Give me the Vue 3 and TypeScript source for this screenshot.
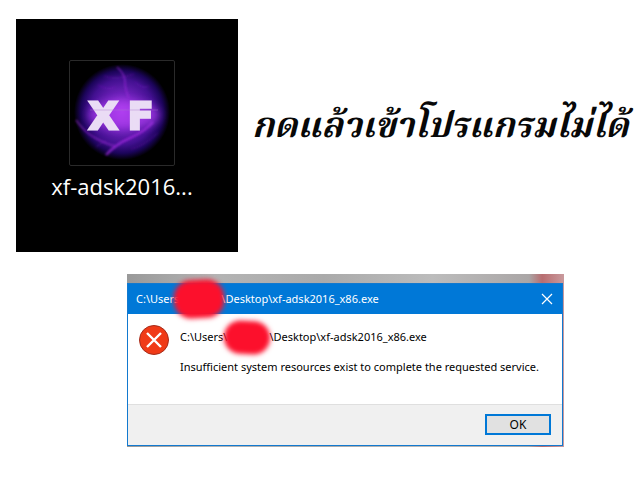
<script setup lang="ts">
interface DialogMessage {
  root: string
  file: string
  detail: string
}

const shortcutLabel: string = 'xf-adsk2016...'
const caption: string = 'กดแล้วเข้าโปรแกรมไม่ได้'
const message: DialogMessage = {
  root: 'C:\\Users',
  file: '\\Desktop\\xf-adsk2016_x86.exe',
  detail: 'Insufficient system resources exist to complete the requested service.',
}
</script>

<template>
  <main class="page">
    <section class="intro">
      <figure class="desktop">
        <div class="tile">
          <svg class="logo" viewBox="0 0 104 104" role="img" aria-label="XF">
            <defs>
              <radialGradient id="orb">
                <stop offset="0" stop-color="#b443f0" />
                <stop offset="0.35" stop-color="#7223be" />
                <stop offset="0.68" stop-color="#421090" />
                <stop offset="0.86" stop-color="#1b0459" />
                <stop offset="1" stop-color="#000000" />
              </radialGradient>
              <filter id="soft" x="-20%" y="-20%" width="140%" height="140%">
                <feGaussianBlur stdDeviation="0.8" />
              </filter>
              <filter id="glow" x="-30%" y="-50%" width="160%" height="200%">
                <feGaussianBlur stdDeviation="4" />
              </filter>
              <filter id="edge" x="-10%" y="-10%" width="120%" height="120%">
                <feGaussianBlur stdDeviation="0.5" />
              </filter>
            </defs>
            <circle cx="52" cy="51" r="48" fill="url(#orb)" />
            <g fill="none" stroke="#a32be0" filter="url(#soft)">
              <path d="M47 6 Q55 13 55 21 T59 37" stroke-width="1.5" opacity="0.6" />
              <path d="M6 59 Q15 72 27 78 T45 85" stroke-width="2" opacity="0.5" />
              <path d="M36 94 Q46 83 60 77 T83 61" stroke-width="2.5" opacity="0.7" />
              <path d="M28 24 Q38 30 45 26 M65 21 Q73 29 79 25 M34 15 Q46 20 64 13" opacity="0.3" />
              <path d="M61 88 Q72 86 88 72 M26 86 Q31 82 36 80" opacity="0.3" />
            </g>
            <ellipse cx="54" cy="54" rx="36" ry="14" fill="#ae3df0" opacity="0.7" filter="url(#glow)" />
            <g class="letters" filter="url(#edge)">
              <text x="19" y="68">X</text>
              <text x="58" y="68">F</text>
            </g>
            <path d="M20 49 H88" stroke="#a777cc" opacity="0.4" />
          </svg>
        </div>
        <figcaption class="shortcut">{{ shortcutLabel }}</figcaption>
      </figure>
      <h1 class="caption">{{ caption }}</h1>
    </section>

    <section class="shot">
      <div class="dialog" role="alertdialog" aria-labelledby="dialog-title" aria-describedby="dialog-text">
        <header class="titlebar">
          <h2 id="dialog-title" class="path">
            <span>{{ message.root }}</span><span class="redacted"></span><span>{{ message.file }}</span>
          </h2>
          <button class="close" type="button" aria-label="Close">
            <svg viewBox="0 0 12 12"><path d="M1 1 L11 11 M11 1 L1 11" /></svg>
          </button>
        </header>
        <div class="body">
          <svg class="error" viewBox="0 0 32 32" aria-hidden="true">
            <circle cx="16" cy="16" r="14.5" fill="#f03a17" stroke="#a52c1b" />
            <path d="M9 9 L23 23 M23 9 L9 23" stroke="#ffffff" stroke-width="2.4" />
          </svg>
          <div id="dialog-text" class="text">
            <p class="path">
              <span>{{ message.root }}\</span><span class="redacted"></span><span>{{ message.file }}</span>
            </p>
            <p>{{ message.detail }}</p>
          </div>
        </div>
        <footer class="actions">
          <button class="ok" type="button">OK</button>
        </footer>
      </div>
    </section>
  </main>
</template>

<style>
body {
  margin: 0;
  background: #ffffff;
}
</style>

<style scoped>
.page {
  padding: 19px 4px 32px 16px;
  font-family: "Noto Sans", "Open Sans", sans-serif;
}

.intro {
  display: flex;
  gap: 14px;
}

.desktop {
  display: flex;
  flex: 0 0 222px;
  flex-direction: column;
  align-items: center;
  box-sizing: border-box;
  margin: 0;
  padding: 41px 10px 52px 0;
  background: #000000;
}

.tile {
  width: 104px;
  height: 104px;
  border: 1px solid #2a2a2a;
  border-radius: 2px;
}

.logo {
  display: block;
}

.letters {
  fill: #eadcf5;
  stroke: #eadcf5;
  stroke-width: 3px;
  font-family: "DejaVu Sans", sans-serif;
  font-size: 37px;
  font-weight: 700;
}

.shortcut {
  padding-top: 6px;
  color: #ffffff;
  font-family: "Open Sans", "Noto Sans", sans-serif;
  font-size: 22px;
  line-height: 28px;
  white-space: nowrap;
}

.caption {
  margin: 0;
  padding-top: 82px;
  color: #080808;
  font-family: "Noto Serif Thai", "Liberation Serif", serif;
  font-size: 35px;
  font-style: italic;
  font-weight: 700;
  line-height: 54px;
  white-space: nowrap;
}

.shot {
  margin: 22px 72px 0 111px;
  padding: 9px 1px 1px 0;
  background: linear-gradient(90deg, #999999, #b4b4b4 20%, #aaaaaa 45%, #bcbcbc 70%, #aaa6a6 92%, #b86d70 95%, #c99a9d);
}

.dialog {
  border: 1px solid #1279cf;
  background: #ffffff;
  color: #000000;
  font-size: 11px;
  line-height: 16px;
}

.titlebar {
  display: flex;
  align-items: center;
  justify-content: space-between;
  height: 30px;
  padding: 0 7px 0 8px;
  background: #0078d7;
  color: #ffffff;
}

.path {
  display: flex;
  font-size: 11px;
  font-weight: 400;
}

.titlebar .path {
  margin: 0;
}

.redacted {
  position: relative;
  width: 42px;
}

.redacted::after {
  position: absolute;
  inset: -10px -2px -10px -4px;
  border-radius: 16px;
  background: #fc102c;
  box-shadow: 0 0 3px 1px #fc102c;
  content: "";
  filter: blur(2px);
  transform: rotate(-3deg);
}

.body .redacted::after {
  inset: -7px 0 -8px -2px;
  transform: rotate(3deg);
}

.close {
  width: 16px;
  height: 16px;
  padding: 2px;
  border: 0;
  background: transparent;
}

.close svg {
  display: block;
  fill: none;
  stroke: #ffffff;
  stroke-width: 1.2;
}

.body {
  display: flex;
  gap: 10px;
  min-height: 90px;
  box-sizing: border-box;
  padding: 10px 10px 0;
}

.error {
  flex: 0 0 32px;
  height: 32px;
}

.text {
  padding-top: 5px;
}

.text p {
  margin: 0 0 14px;
  white-space: nowrap;
}

.actions {
  display: flex;
  justify-content: flex-end;
  padding: 9px 11px 10px;
  border-top: 1px solid #dfdfdf;
  background: #f0f0f0;
}

.ok {
  width: 66px;
  height: 21px;
  padding: 0;
  border: 2px solid #0078d7;
  background: #e1e1e1;
  color: #000000;
  font: inherit;
  font-size: 12px;
}
</style>
